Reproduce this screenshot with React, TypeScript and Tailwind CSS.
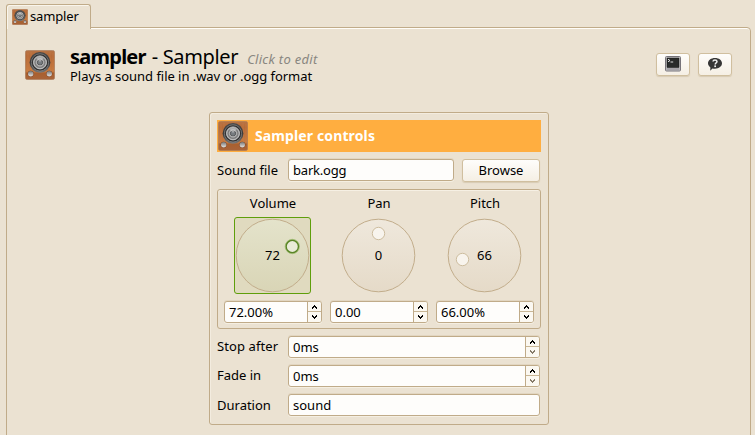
import React from "react";

function Speaker({ size, id }: { size: number; id: string }) {
  return (
    <svg width={size} height={size} viewBox="0 0 30 30" className="block shrink-0">
      <defs>
        <linearGradient id={`${id}-wood`} x1="0" y1="0" x2="0" y2="1">
          <stop offset="0" stopColor="#b87445" />
          <stop offset="0.2" stopColor="#b66a37" />
          <stop offset="0.72" stopColor="#c67a40" />
          <stop offset="0.78" stopColor="#a9602f" />
          <stop offset="1" stopColor="#a9643a" />
        </linearGradient>
        <linearGradient id={`${id}-rim`} x1="0" y1="0" x2="0" y2="1">
          <stop offset="0" stopColor="#4a4a4a" />
          <stop offset="0.5" stopColor="#3a3a3a" />
          <stop offset="1" stopColor="#777" />
        </linearGradient>
        <radialGradient id={`${id}-cone`}>
          <stop offset="0" stopColor="#8f9498" />
          <stop offset="0.4" stopColor="#777" />
          <stop offset="0.48" stopColor="#c5c5c5" />
          <stop offset="0.75" stopColor="#777" />
          <stop offset="1" stopColor="#bbb" />
        </radialGradient>
        <linearGradient id={`${id}-knob`} x1="0" y1="0" x2="0" y2="1">
          <stop offset="0" stopColor="#777" />
          <stop offset="1" stopColor="#e6e2de" />
        </linearGradient>
      </defs>
      <rect x="0.4" y="0.4" width="29.2" height="29.2" rx="2" fill={`url(#${id}-wood)`} stroke="#a77a5a" strokeWidth="0.7" />
      <path d="M3 3v19M6 2v20M25 2v20M28 3v18" stroke="#d28550" strokeWidth="0.5" opacity="0.7" />
      <circle cx="15" cy="12.4" r="10.4" fill={`url(#${id}-rim)`} />
      <circle cx="15" cy="12.4" r="8.6" fill="#303030" stroke="#8c8c8c" strokeWidth="0.7" />
      <circle cx="15" cy="12.4" r="6.5" fill={`url(#${id}-cone)`} stroke="#c8c8c8" strokeWidth="0.9" />
      <circle cx="15" cy="12.4" r="2.7" fill="#777c80" stroke="#444" strokeWidth="0.6" />
      <path d="M11.2 8a6 6 0 0 1 7.6 0l-3.8 4z" fill="#ddd" opacity="0.5" />
      <circle cx="5.7" cy="23.8" r="3.1" fill="#7b4020" />
      <circle cx="24.3" cy="23.8" r="3.1" fill="#7b4020" />
      <circle cx="5.7" cy="23.7" r="2.7" fill={`url(#${id}-knob)`} />
      <circle cx="24.3" cy="23.7" r="2.7" fill={`url(#${id}-knob)`} />
    </svg>
  );
}

function Arrow({ up, dim }: { up?: boolean; dim?: boolean }) {
  return (
    <svg width="5" height="4" viewBox="0 0 5 4" className="block" shapeRendering="crispEdges">
      <path
        d={up ? "M2 0h1v1h1v1h1v2H4V3H3V2H2v1H1v1H0V2h1V1h1z" : "M0 0h1v1h1v1h1V1h1V0h1v2H4v1H3v1H2V3H1V2H0z"}
        fill={dim ? "#857a69" : "#000"}
      />
    </svg>
  );
}

function Spin({ value, className, dim }: { value: string; className: string; dim?: boolean }) {
  return (
    <div
      className={`flex h-[22px] overflow-hidden rounded-[3px] border border-[#c0ab89] bg-[#fefdfb] shadow-[0_1px_0_#f5efe2,0_-1px_0_#e2d6c1] ${className}`}
    >
      <div className="h-5 flex-1 pl-1 text-[13px] leading-[21px]">{value}</div>
      <div className="flex w-[14px] flex-col border-l border-[#c0ab89] bg-[#fbf8f1]">
        <div className="flex h-[10px] items-center justify-center border-b border-[#c8b695]">
          <Arrow up />
        </div>
        <div className="flex h-[10px] items-center justify-center">
          <Arrow dim={dim} />
        </div>
      </div>
    </div>
  );
}

function Dial({ value, kx, ky, active }: { value: string; kx: number; ky: number; active?: boolean }) {
  return (
    <div
      className={`relative mr-px flex h-[77px] w-[77px] items-center justify-center rounded-[3px] border ${
        active ? "border-[#5f9e0b] bg-[#e0dabf]" : "border-transparent"
      }`}
    >
      <svg width="75" height="75" viewBox="0 0 75 75" className="absolute left-0 top-0">
        <defs>
          <linearGradient id={`dial-${value}`} x1="0" y1="0" x2="0" y2="1">
            <stop offset="0" stopColor={active ? "#e4e3cb" : "#efe8dc"} />
            <stop offset="1" stopColor={active ? "#d9d5b6" : "#e5dac8"} />
          </linearGradient>
        </defs>
        <circle cx="37.5" cy="37.5" r="36.3" fill={`url(#dial-${value})`} stroke="#c2ad8b" />
        <circle
          cx={kx}
          cy={ky}
          r="6.2"
          fill={active ? "#e9ebd8" : "#f8f4ed"}
          stroke={active ? "#5a8426" : "#cdbd9f"}
          strokeWidth={active ? 1.5 : 1}
        />
        {active && <circle cx={kx} cy={ky} r="7.2" fill="none" stroke="#8db45a" strokeWidth="0.6" />}
      </svg>
      <span className="relative mb-[2px] text-[13px] leading-4">{value}</span>
    </div>
  );
}

function Column(p: { name: string; value: string; kx: number; ky: number; spin: string; active?: boolean }) {
  return (
    <div className="flex w-[98px] flex-col items-center">
      <div className="mb-1 h-5 text-[13px] leading-5">{p.name}</div>
      <Dial value={p.value} kx={p.kx} ky={p.ky} active={p.active} />
      <Spin value={p.spin} className="mt-[7px] w-[98px]" />
    </div>
  );
}

const field =
  "rounded-[3px] border border-[#c0ab89] bg-[#fefdfb] pl-1 text-[13px] shadow-[0_1px_0_#f5efe2,0_-1px_0_#e2d6c1]";
const button =
  "flex items-center justify-center rounded-[3px] border border-[#d0bf9f] bg-gradient-to-b from-[#fefdfb] to-[#f5efe4] shadow-[0_1px_1px_#d8cbb3]";

export default function App() {
  return (
    <div className="h-[435px] w-[755px] overflow-hidden bg-[#ebe2d2] pl-[6px] pr-1 pt-1 font-['Noto_Sans',sans-serif] text-black">
      <div className="relative z-10 flex h-[25px] w-[85px] items-center rounded-t-[3px] border border-b-0 border-[#c0ab89] bg-[#ebe2d2] pl-[5px] shadow-[inset_1px_1px_0_#f9f5ec]">
        <Speaker size={16} id="tab" />
        <span className="-mt-[2px] ml-[2px] text-[13px] leading-4 tracking-[-0.15px]">sampler</span>
      </div>
      <div className="-mt-[2px] h-[420px] w-[745px] rounded-tr-[4px] border border-[#c0ab89] pl-[18px] pr-[18px] pt-[16px] shadow-[inset_0_1px_0_#fffdf8]">
        <div className="flex h-[68px] items-start">
          <div className="mt-[6px]">
            <Speaker size={30} id="head" />
          </div>
          <div className="ml-[15px] flex-1 whitespace-nowrap">
            <div className="flex h-[25px] items-baseline pt-[2px]">
              <span className="text-[20px] font-bold leading-[22px] tracking-[-0.75px]">sampler</span>
              <span className="ml-[6px] text-[20px] leading-[22px] tracking-[-0.35px]">- Sampler</span>
              <span className="ml-[9px] text-[13px] italic leading-[14px] tracking-[0.28px] text-[#888680]">
                Click to edit
              </span>
            </div>
            <div className="text-[13px] leading-[14px] tracking-[-0.04px]">Plays a sound file in .wav or .ogg format</div>
          </div>
          <div className="mt-[9px] flex gap-2">
            <div className={`${button} h-[23px] w-[34px]`}>
              <svg width="16" height="16" viewBox="0 0 16 16" className="-mt-px">
                <rect x="0.5" y="0.5" width="15" height="14.5" rx="1" fill="#c9c7c9" stroke="#77747a" />
                <rect x="2" y="2" width="12" height="9.5" fill="#292b2b" stroke="#111" strokeWidth="0.5" />
                <path d="M3 3.2l2 1.3-2 1.3M5.5 6h2.7" fill="none" stroke="#eee" strokeWidth="0.9" />
                <path d="M1.5 13h13" stroke="#85828a" />
              </svg>
            </div>
            <div className={`${button} h-[23px] w-[34px]`}>
              <svg width="16" height="16" viewBox="0 0 16 16" className="-mt-px">
                <path
                  d="M8 2c4 0 7 2.2 7 5.3s-3 5.4-7 5.4c-1 0-1.7-.1-2.5-.3L3.2 14.7l.2-3.3C2 10.4 1 9 1 7.3 1 4.2 4 2 8 2z"
                  fill="#363636"
                />
                <path d="M6 5.5Q6.1 4 8 4t2 1.5c0 1.2-1.7 1.3-1.8 3" fill="none" stroke="#eee" strokeWidth="1.5" />
                <rect x="7.3" y="9.4" width="1.7" height="1.7" fill="#eee" />
              </svg>
            </div>
          </div>
        </div>
        <div className="ml-[184px] h-[313px] w-[340px] rounded-[3px] border border-[#c0ab89] px-[7px] pt-[7px] shadow-[inset_1px_1px_0_#f3ecdf]">
          <div className="flex h-8 w-[324px] items-center bg-[#ffae40] pl-px">
            <Speaker size={30} id="panel" />
            <span className="-mt-px ml-[7px] text-[14px] font-bold tracking-[0.12px] text-white">Sampler controls</span>
          </div>
          <div className="mt-[7px] flex h-[23px] w-[324px]">
            <div className="w-[71px] whitespace-nowrap text-[13px] leading-[22px]">Sound file</div>
            <div className={`${field} h-[22px] w-[166px] leading-[21px] tracking-[-0.2px]`}>bark.ogg</div>
            <div className={`${button} ml-2 h-[23px] w-[78px] text-[13px]`}>Browse</div>
          </div>
          <div className="mt-[7px] flex h-[140px] w-[324px] gap-2 rounded-[3px] border border-[#c0ab89] pl-[6px] pt-[3px] shadow-[inset_0_1px_0_#f6f0e4]">
            <Column name="Volume" value="72" kx={57.3} ky={28.5} spin="72.00%" active />
            <Column name="Pan" value="0" kx={37.5} ky={15.5} spin="0.00" />
            <Column name="Pitch" value="66" kx={15.5} ky={41.5} spin="66.00%" />
          </div>
          <div className="mt-[7px] flex h-[22px]">
            <div className="w-[71px] whitespace-nowrap text-[13px] leading-[21px] tracking-[0.1px]">Stop after</div>
            <Spin value="0ms" className="w-[252px]" dim />
          </div>
          <div className="mt-[7px] flex h-[22px]">
            <div className="w-[71px] whitespace-nowrap text-[13px] leading-[21px]">Fade in</div>
            <Spin value="0ms" className="w-[252px]" dim />
          </div>
          <div className="mt-[7px] flex h-[22px]">
            <div className="w-[71px] whitespace-nowrap text-[13px] leading-[22px]">Duration</div>
            <div className={`${field} h-[22px] w-[252px] leading-[21px]`}>sound</div>
          </div>
        </div>
      </div>
    </div>
  );
}
